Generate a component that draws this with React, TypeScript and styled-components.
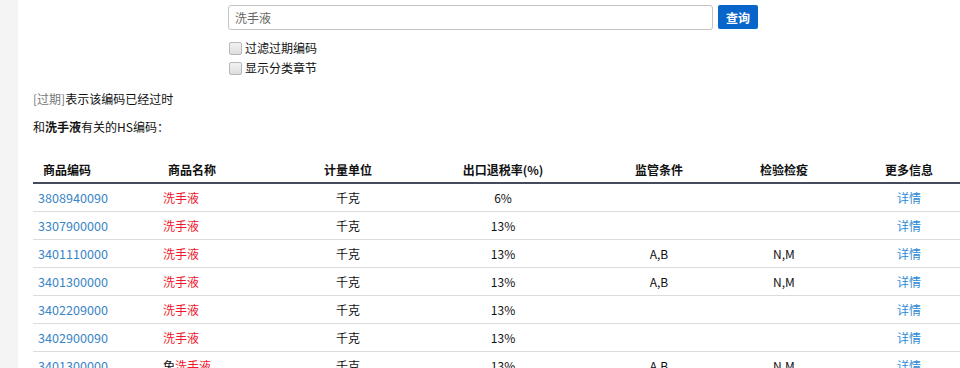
import React, { useState } from "react";
import styled, { createGlobalStyle } from "styled-components";

const GlobalStyle = createGlobalStyle`
  html, body {
    margin: 0;
    padding: 0;
    background: #f4f4f4;
    overflow: hidden;
  }
  body {
    font-family: "Noto Sans CJK SC", "Noto Sans", sans-serif;
    font-size: 12px;
    color: #111;
  }
`;

const Page = styled.div`
  margin-left: 18px;
  background: #fff;
  min-height: 368px;
  width: 1000px;
  padding: 5px 0 0 15px;
  box-sizing: border-box;
`;

const SearchRow = styled.div`
  display: flex;
  align-items: flex-start;
  gap: 5px;
  margin-left: 195px;
`;

const SearchInput = styled.input`
  width: 485px;
  height: 25px;
  box-sizing: border-box;
  border: 1px solid #c4c4c4;
  border-radius: 3px;
  padding: 0 6px;
  font-family: inherit;
  font-size: 12px;
  color: #666;
  outline: none;
`;

const SearchButton = styled.button`
  height: 24px;
  width: 40px;
  border: none;
  border-radius: 2px;
  background: #0865c9;
  color: #fff;
  font-family: inherit;
  font-weight: bold;
  font-size: 12px;
  padding: 0;
  cursor: pointer;
`;

const Options = styled.div`
  margin: 10px 0 0 196px;
  display: flex;
  flex-direction: column;
  gap: 4px;
`;

const OptionLabel = styled.label`
  display: flex;
  align-items: center;
  gap: 3px;
  height: 16px;
  line-height: 16px;
`;

const Box = styled.span`
  width: 11px;
  height: 11px;
  border: 1px solid #b8b8b8;
  border-radius: 2px;
  background: linear-gradient(#f2f2f2, #dedede);
  display: inline-block;
`;

const Note = styled.p`
  margin: 15px 0 0;
  line-height: 16px;
`;

const Muted = styled.span`
  color: #777;
`;

const Caption = styled.p`
  margin: 12px 0 0;
  line-height: 16px;
`;

const Table = styled.table`
  margin-top: 21px;
  border-collapse: collapse;
  table-layout: fixed;
  width: 942px;
`;

const Th = styled.th<{ $left?: boolean }>`
  font-weight: bold;
  text-align: ${(p) => (p.$left ? "left" : "center")};
  padding: 0 0 0 ${(p) => (p.$left ? "10px" : "0")};
  height: 26px;
  vertical-align: middle;
  border-bottom: 2px solid #454b5c;
`;

const Td = styled.td<{ $left?: boolean }>`
  text-align: ${(p) => (p.$left ? "left" : "center")};
  padding: 0 0 0 ${(p) => (p.$left ? "5px" : "0")};
  height: 27px;
  border-bottom: 1px solid #dcdcdc;
  white-space: nowrap;
`;

const CodeLink = styled.a`
  color: #3a85c6;
  text-decoration: none;
  font-size: 12.6px;
`;

const Hit = styled.span`
  color: #f0182c;
`;

const More = styled.a`
  color: #2d8ad6;
  text-decoration: none;
`;

type Row = { code: string; prefix?: string; unit: string; rate: string; cond: string; insp: string };

const rows: Row[] = [
  { code: "3808940090", unit: "千克", rate: "6%", cond: "", insp: "" },
  { code: "3307900000", unit: "千克", rate: "13%", cond: "", insp: "" },
  { code: "3401110000", unit: "千克", rate: "13%", cond: "A,B", insp: "N,M" },
  { code: "3401300000", unit: "千克", rate: "13%", cond: "A,B", insp: "N,M" },
  { code: "3402209000", unit: "千克", rate: "13%", cond: "", insp: "" },
  { code: "3402900090", unit: "千克", rate: "13%", cond: "", insp: "" },
  { code: "3401300000", prefix: "免", unit: "千克", rate: "13%", cond: "A,B", insp: "N,M" },
];

const widths = [125, 125, 130, 180, 132, 118, 132];

const App: React.FC = () => {
  const [keyword, setKeyword] = useState<string>("洗手液");

  return (
    <>
      <GlobalStyle />
      <Page>
        <SearchRow>
          <SearchInput value={keyword} onChange={(e) => setKeyword(e.target.value)} />
          <SearchButton>查询</SearchButton>
        </SearchRow>
        <Options>
          <OptionLabel>
            <Box />
            过滤过期编码
          </OptionLabel>
          <OptionLabel>
            <Box />
            显示分类章节
          </OptionLabel>
        </Options>
        <Note>
          <Muted>[过期]</Muted>表示该编码已经过时
        </Note>
        <Caption>
          和<b>洗手液</b>有关的HS编码：
        </Caption>
        <Table>
          <colgroup>
            {widths.map((w, i) => (
              <col key={i} style={{ width: w }} />
            ))}
          </colgroup>
          <thead>
            <tr>
              <Th $left>商品编码</Th>
              <Th $left>商品名称</Th>
              <Th>计量单位</Th>
              <Th>出口退税率(%)</Th>
              <Th>监管条件</Th>
              <Th>检验检疫</Th>
              <Th>更多信息</Th>
            </tr>
          </thead>
          <tbody>
            {rows.map((r, i) => (
              <tr key={i}>
                <Td $left>
                  <CodeLink href="#">{r.code}</CodeLink>
                </Td>
                <Td $left>
                  {r.prefix}
                  <Hit>洗手液</Hit>
                </Td>
                <Td>{r.unit}</Td>
                <Td>{r.rate}</Td>
                <Td>{r.cond}</Td>
                <Td>{r.insp}</Td>
                <Td>
                  <More href="#">详情</More>
                </Td>
              </tr>
            ))}
          </tbody>
        </Table>
      </Page>
    </>
  );
};

export default App;
